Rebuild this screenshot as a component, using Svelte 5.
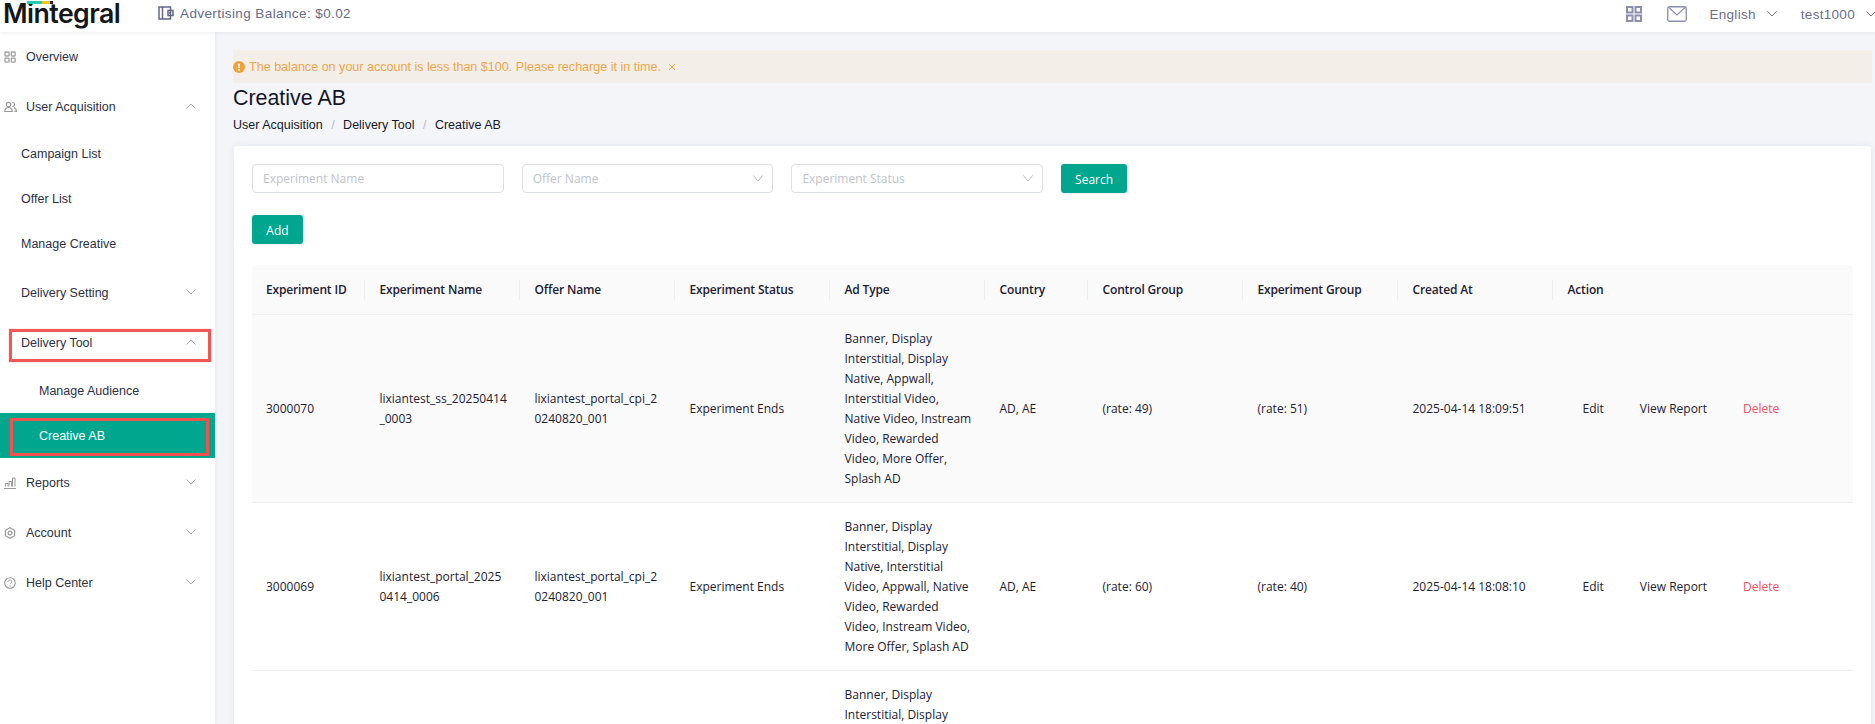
<script>
  const rows = [
    { id: '3000070', name: ['lixiantest_ss_20250414', '_0003'], offer: ['lixiantest_portal_cpi_2', '0240820_001'], status: 'Experiment Ends',
      ad: ['Banner, Display', 'Interstitial, Display', 'Native, Appwall,', 'Interstitial Video,', 'Native Video, Instream', 'Video, Rewarded', 'Video, More Offer,', 'Splash AD'],
      country: 'AD, AE', control: '(rate: 49)', exp: '(rate: 51)', created: '2025-04-14 18:09:51', shaded: true },
    { id: '3000069', name: ['lixiantest_portal_2025', '0414_0006'], offer: ['lixiantest_portal_cpi_2', '0240820_001'], status: 'Experiment Ends',
      ad: ['Banner, Display', 'Interstitial, Display', 'Native, Interstitial', 'Video, Appwall, Native', 'Video, Rewarded', 'Video, Instream Video,', 'More Offer, Splash AD'],
      country: 'AD, AE', control: '(rate: 60)', exp: '(rate: 40)', created: '2025-04-14 18:08:10', shaded: false }
  ];
  const heads = ['Experiment ID', 'Experiment Name', 'Offer Name', 'Experiment Status', 'Ad Type', 'Country', 'Control Group', 'Experiment Group', 'Created At', 'Action'];
</script>

{#snippet chev(up)}
  <svg class="chev" class:up viewBox="0 0 10 6" width="10" height="6"><path d="M.5.5L5 5 9.500.5" fill="none" stroke="currentColor" stroke-width="1"/></svg>
{/snippet}

{#snippet selchev()}
  <svg viewBox="0 0 10 7" width="10" height="7"><path d="M.5.5L5 6 9.500.5" fill="none" stroke="#b9bcc4"/></svg>
{/snippet}

<div class="page">
  <header class="topbar">
    <div class="logo">
      <span class="logo-text">Mintegral</span>
      <span class="logo-bar"><i class="t"></i><i class="y"></i><i class="k"></i></span>
    </div>
    <div class="balance">
      <svg viewBox="0 0 16 14" width="16" height="14"><path d="M1 1h11.500v12H1zM4.500 1v12M15 4.500h-5v5h5z" fill="none" stroke="#62688a" stroke-width="1.500"/><circle cx="12" cy="7" r="1" fill="#62688a"/></svg>
      <span>Advertising Balance: $0.02</span>
    </div>
    <div class="top-right">
      <svg class="grid-ic" viewBox="0 0 16 16" width="16" height="16"><path d="M1 1h5.500v5.500H1zM9.500 1H15v5.500H9.500zM1 9.500h5.500V15H1zM9.500 9.500H15V15H9.500z" fill="none" stroke="#8a8fae" stroke-width="2"/></svg>
      <svg class="mail-ic" viewBox="0 0 20 16" width="20" height="16"><rect x=".75" y=".75" width="18.500" height="14.500" rx="1.500" fill="none" stroke="#8a8fae" stroke-width="1.300"/><path d="M2 1.500l8 7.500 8-7.500" fill="none" stroke="#8a8fae" stroke-width="1.200"/></svg>
      <span class="lang">English</span>
      {@render chev(false)}
      <span class="user">test1000</span>
      {@render chev(false)}
    </div>
  </header>

  <div class="body">
    <nav class="side">
      <div class="item parent">
        <svg class="ic" viewBox="0 0 12 12" width="12" height="12"><rect x="1" y="1" width="4" height="4" rx=".8" fill="none" stroke="#a0a0a0" stroke-width="1.300"/><rect x="7.200" y="1" width="4" height="4" rx=".8" fill="none" stroke="#a0a0a0" stroke-width="1.300"/><rect x="1" y="7.200" width="4" height="4" rx=".8" fill="none" stroke="#a0a0a0" stroke-width="1.300"/><rect x="7.200" y="7.200" width="4" height="4" rx=".8" fill="none" stroke="#a0a0a0" stroke-width="1.300"/></svg>
        <span>Overview</span>
      </div>
      <div class="item parent">
        <svg class="ic" viewBox="0 0 13 12" width="13" height="12"><circle cx="4.500" cy="3.500" r="2.200" fill="none" stroke="#9a9a9a" stroke-width="1.200"/><path d="M.8 10.500c0-2.500 1.500-4 3.700-4s3.700 1.500 3.700 4z" fill="none" stroke="#9a9a9a" stroke-width="1.200"/><path d="M8.500 1.500a2 2 0 0 1 0 4M10 6.500c1.500.5 2.400 1.800 2.400 4h-2" fill="none" stroke="#9a9a9a" stroke-width="1.200"/></svg>
        <span>User Acquisition</span>
        {@render chev(true)}
      </div>
      <div class="item sub">Campaign List</div>
      <div class="item sub">Offer List</div>
      <div class="item sub">Manage Creative</div>
      <div class="item sub tall first-tall">Delivery Setting {@render chev(false)}</div>
      <div class="item sub tall marked-a">Delivery Tool {@render chev(true)}</div>
      <div class="item leaf">Manage Audience</div>
      <div class="item leaf active marked-b">Creative AB</div>
      <div class="item parent">
        <svg class="ic" viewBox="0 0 12 12" width="12" height="12"><path d="M0 11.500h12M1.500 9.500v-3h2.500v3M5 9.500v-5h2.500v5M8.500 9.500V1H11v8.500" fill="none" stroke="#9a9a9a"/></svg>
        <span>Reports</span>
        {@render chev(false)}
      </div>
      <div class="item parent">
        <svg class="ic" viewBox="0 0 12 12" width="12" height="12"><path d="M6 .7l4.600 2.650v5.300L6 11.300 1.400 8.650v-5.300z" fill="none" stroke="#9a9a9a" stroke-width="1.200"/><circle cx="6" cy="6" r="1.900" fill="none" stroke="#9a9a9a" stroke-width="1.200"/></svg>
        <span>Account</span>
        {@render chev(false)}
      </div>
      <div class="item parent">
        <svg class="ic" viewBox="0 0 12 12" width="12" height="12"><circle cx="6" cy="6" r="5.300" fill="none" stroke="#9a9a9a" stroke-width="1.100"/><path d="M4.300 4.700c0-2.200 3.500-2.200 3.500 0 0 1.300-1.800 1.300-1.800 2.600" fill="none" stroke="#9a9a9a"/><circle cx="6" cy="9" r=".7" fill="#9a9a9a"/></svg>
        <span>Help Center</span>
        {@render chev(false)}
      </div>
    </nav>

    <main class="main">
      <div class="alert">
        <svg viewBox="0 0 12 12" width="12" height="12"><circle cx="6" cy="6" r="6" fill="#eda23c"/><rect x="5.200" y="2.500" width="1.600" height="4.500" fill="#fff"/><rect x="5.200" y="8" width="1.600" height="1.600" fill="#fff"/></svg>
        <span>The balance on your account is less than $100. Please recharge it in time.</span>
        <svg class="close" viewBox="0 0 8 8" width="8" height="8"><path d="M1 1l6 6M7 1L1 7" stroke="#eda23c" fill="none"/></svg>
      </div>
      <h1>Creative AB</h1>
      <div class="crumbs">
        <span>User Acquisition</span><i>/</i><span>Delivery Tool</span><i>/</i><span>Creative AB</span>
      </div>

      <section class="card">
        <div class="filters">
          <div class="field">Experiment Name</div>
          <div class="field">Offer Name {@render selchev()}</div>
          <div class="field">Experiment Status {@render selchev()}</div>
          <button class="btn search">Search</button>
        </div>
        <button class="btn add">Add</button>

        <table>
          <thead>
            <tr>
              {#each heads as h}<th>{h}</th>{/each}
            </tr>
          </thead>
          <tbody>
            {#each rows as r}
              <tr class:shaded={r.shaded}>
                <td>{r.id}</td>
                <td>{#each r.name as l}<div>{l}</div>{/each}</td>
                <td>{#each r.offer as l}<div>{l}</div>{/each}</td>
                <td>{r.status}</td>
                <td>{#each r.ad as l}<div>{l}</div>{/each}</td>
                <td>{r.country}</td>
                <td>{r.control}</td>
                <td>{r.exp}</td>
                <td>{r.created}</td>
                <td><div class="actions"><span>Edit</span><span>View Report</span><span class="del">Delete</span></div></td>
              </tr>
            {/each}
            <tr>
              <td></td><td></td><td></td><td></td>
              <td><div>Banner, Display</div><div>Interstitial, Display</div></td>
              <td></td><td></td><td></td><td></td><td></td>
            </tr>
          </tbody>
        </table>
      </section>
    </main>
  </div>
</div>

<style>
  :global(body) { margin: 0; background: #f4f5f9; }
  .page { height: 724px; overflow: hidden; display: flex; flex-direction: column; font-family: "Liberation Sans", Arial, sans-serif; color: #23263a; }

  .topbar { height: 32px; flex: none; background: #fff; display: flex; align-items: center; position: relative; z-index: 2; box-shadow: 0 1px 4px rgba(0, 0, 0, .07); }
  .logo { width: 158px; height: 32px; position: relative; flex: none; }
  .logo-text { position: absolute; left: 3px; top: 1px; font: 600 26.700px/24px Inter, sans-serif; letter-spacing: -.55px; color: #14161a; }
  .logo-bar { position: absolute; left: 27px; top: 1px; height: 3px; display: flex; }
  .logo-bar i { display: block; height: 3px; }
  .logo-bar .t { width: 15px; background: #1fd0b4; }
  .logo-bar .y { width: 8px; background: #f5c518; }
  .logo-bar .k { width: 3px; background: #222; }
  .balance { display: flex; align-items: center; gap: 6px; color: #666b88; font-size: 13.500px; letter-spacing: .4px; padding-bottom: 6px; }
  .top-right { margin-left: auto; display: flex; align-items: center; color: #6c6f88; font-size: 13.500px; letter-spacing: .3px; padding-bottom: 4px; }
  .mail-ic { margin-left: 25px; }
  .lang { margin-left: 22px; }
  .top-right .chev { margin-left: 11px; color: #6c6f88; }
  .user { margin-left: 24px; }
  .top-right .chev:last-child { margin-right: -1px; }

  .body { flex: 1; display: flex; min-height: 0; }
  .side { width: 215px; flex: none; background: #fff; box-shadow: 1px 0 3px rgba(0, 0, 0, .04); font-size: 12.500px; color: #2d3045; position: relative; z-index: 1; }
  .item { display: flex; align-items: center; position: relative; box-sizing: border-box; }
  .parent { height: 50px; padding-left: 26px; }
  .parent .ic { position: absolute; left: 4px; top: 19px; }
  .sub { height: 44.700px; padding-left: 21px; }
  .tall { height: 50px; }
  .first-tall { margin-top: 2px; }
  .leaf { height: 45px; padding-left: 39px; }
  .chev { color: #aeb0b8; }
  .chev.up { transform: scaleY(-1); }
  .item .chev { position: absolute; left: 186px; top: 21px; }
  .active { background: #00a78e; color: #fff; }
  .marked-a::after { content: ""; position: absolute; left: 9px; right: 4px; top: 11px; height: 33px; box-sizing: border-box; border: 3px solid #f25555; box-shadow: 0 0 1px rgba(242, 85, 85, .6); }
  .marked-b::after { content: ""; position: absolute; left: 10px; right: 6px; top: 5px; height: 38px; box-sizing: border-box; border: 3px solid #f45050; }

  .main { flex: 1; min-width: 0; padding: 18px 3px 0 18px; }
  .alert { height: 33px; background: #f4eee8; display: flex; align-items: center; color: #eda64c; font-size: 12.570px; }
  .alert span { margin-left: 4px; }
  .alert .close { margin-left: 7px; }
  h1 { margin: 0; font-weight: 400; font-size: 21.400px; line-height: 30px; color: #14172a; }
  .crumbs { height: 23px; display: flex; align-items: center; font-size: 12.500px; color: #14172a; }
  .crumbs i { font-style: normal; color: #b9bcc4; margin: 0 8.500px; }

  .card { margin: 10px 1px 0 1px; background: #fff; border-radius: 4px; padding: 18px; box-shadow: 0 0 8px rgba(60, 70, 110, .08); font-family: "Open Sans", sans-serif; font-size: 12px; height: 700px; box-sizing: border-box; }
  .filters { display: flex; gap: 18px; }
  .field { width: 251.700px; height: 29px; box-sizing: border-box; border: 1px solid #dcdfe6; border-radius: 4px; padding-left: 10px; color: #c0c4cc; display: flex; align-items: center; justify-content: space-between; padding-right: 9px; }
  .btn { border: 0; height: 29px; background: #00a78e; color: #fff; border-radius: 3px; font: 12px "Open Sans", sans-serif; padding: 1px 0 0; box-shadow: 0 1px 1px rgba(0, 0, 0, .06); }
  .search { width: 66px; }
  .add { width: 51px; margin-top: 22px; display: block; }

  table { margin-top: 21px; width: 1601px; table-layout: fixed; border-collapse: collapse; color: #1d2033; }
  th { height: 49px; box-sizing: border-box; background: #fafafa; border-bottom: 1px solid #f0f0f0; text-align: left; font-weight: 600; padding: 0 0 0 15px; position: relative; width: 155px; white-space: nowrap; letter-spacing: -.15px; }
  th:first-child { width: 112.500px; padding-left: 14px; border-top-left-radius: 4px; }
  th:nth-child(6) { width: 103px; }
  th:last-child { width: 300.500px; border-top-right-radius: 4px; }
  th:not(:last-child)::after { content: ""; position: absolute; right: 0; top: 15px; height: 20px; width: 1px; background: #eeeeee; }
  td { padding: 14px 0 13px 15px; line-height: 20px; border-bottom: 1px solid #f0f0f0; white-space: nowrap; vertical-align: middle; box-sizing: border-box; }
  td:first-child { padding-left: 14px; }
  .shaded td { background: #fafafa; }
  .actions { display: flex; gap: 36px; padding-left: 15px; }
  .del { color: #f6505f; }
</style>
